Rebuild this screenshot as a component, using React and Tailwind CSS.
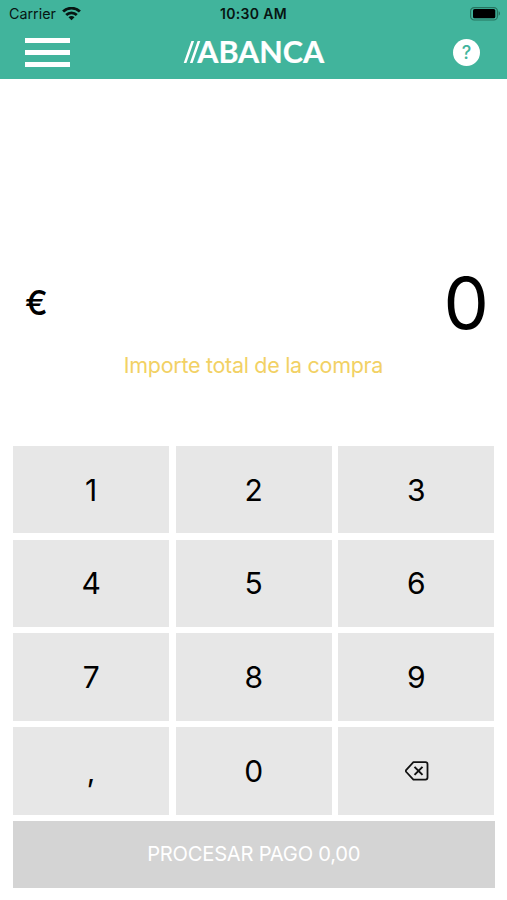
const keys = ["1", "2", "3", "4", "5", "6", "7", "8", "9", ",", "0", "back"];

function Wifi() {
  return (
    <svg className="ml-[6px] h-[15px] w-[19px]" viewBox="0 0 19 15" fill="none" stroke="#071512" strokeWidth="2.8">
      <path d="M1.100 4.600a12 12 0 0 1 16.800 0" />
      <path d="M4.200 8.100a7.600 7.600 0 0 1 10.600 0" />
      <path d="M9.500 13.300L6.500 10.300a4.200 4.200 0 0 1 6 0z" fill="#071512" stroke="none" />
    </svg>
  );
}

function Battery() {
  return (
    <svg className="h-[14px] w-[31px]" viewBox="0 0 31 14">
      <rect x="0.600" y="0.600" width="26.800" height="12.400" rx="3.600" fill="none" stroke="#26745f" strokeWidth="1.2" />
      <rect x="3" y="2" width="22.300" height="9.300" rx="1.600" fill="#000" />
      <path d="M28.600 4.300c1.900.7 1.900 3.700 0 4.400z" fill="#26745f" />
    </svg>
  );
}

function Backspace() {
  return (
    <svg className="ml-[1px] h-[20px] w-[24px]" viewBox="0 0 24 20" fill="none" stroke="#111" strokeWidth="1.8" strokeLinejoin="round" strokeLinecap="round">
      <path d="M8.400 1.200h12.100a2 2 0 0 1 2 2v13.400a2 2 0 0 1-2 2H8.400L1.300 11q-.9-1.100 0-2.200z" />
      <path d="M9.500 5.900l8 8M17.500 5.900l-8 8" strokeWidth="2" strokeLinecap="butt" />
    </svg>
  );
}

function Logo() {
  return (
    <svg className="h-[44px] w-[148px] shrink-0" viewBox="0 -7 148 44" fill="#fff">
      <path d="M9.400 4h2.700L4.400 26H1.700zM15.600 4h2.700L10.600 26H7.900z" />
      <text x="15.200" y="26" textLength="127" lengthAdjust="spacingAndGlyphs" className="font-['Lato',sans-serif] text-[31px] font-bold" stroke="#fff" strokeWidth="0.200">ABANCA</text>
    </svg>
  );
}

export default function App() {
  return (
    <div className="flex h-[900px] w-[507px] flex-col overflow-hidden bg-white font-['Inter','Liberation_Sans',sans-serif] text-black">
      <header className="h-[79px] bg-[#41b49c]">
        <div className="grid h-[28px] grid-cols-3 items-center pl-[6px] pr-[6px] text-[#071512]">
          <div className="flex items-center pl-[3px]">
            <span className="text-[14.300px] leading-[28px]">Carrier</span>
            <Wifi />
          </div>
          <span className="text-center text-[14px] font-semibold leading-[28px] tracking-[0.350px]">10:30 AM</span>
          <div className="flex justify-end"><Battery /></div>
        </div>
        <div className="grid h-[48px] grid-cols-3 items-center pl-[25px] pr-[27px]">
          <div className="flex w-[45px] flex-col gap-[7px]">
            <span className="h-[5px] bg-white" />
            <span className="h-[5px] bg-white" />
            <span className="h-[5px] bg-white" />
          </div>
          <div className="flex justify-center pl-[6px]"><Logo /></div>
          <div className="flex justify-end">
            <span className="flex size-[27px] items-center justify-center rounded-full bg-white pt-px text-[18px] font-medium leading-none text-[#41b49c]">?</span>
          </div>
        </div>
      </header>

      <main className="flex flex-1 flex-col">
        <div className="mt-[178px] flex h-[90px] items-center justify-between pl-[25px] pr-[18px]">
          <span className="pt-[2px] text-[34px] font-medium leading-none">€</span>
          <span className="pt-px text-[72px] leading-none">0</span>
        </div>
        <p className="h-[38px] text-center text-[21.500px] leading-[37px] tracking-[-0.300px] text-[#f2d164]">Importe total de la compra</p>

        <div className="ml-[13px] mr-[12.500px] mt-[61px] grid h-[368.500px] grid-cols-3 grid-rows-4 gap-[6.300px]">
          {keys.map((key) => (
            <button key={key} className="flex items-center justify-center bg-[#e7e7e7] text-[30px] leading-none">
              {key === "back" ? <Backspace /> : key}
            </button>
          ))}
        </div>
        <button className="ml-[13px] mr-[12.500px] mt-[6px] h-[67px] bg-[#d4d4d4] pt-px text-[20.200px] tracking-[-0.250px] text-white">PROCESAR PAGO 0,00</button>
      </main>
    </div>
  );
}
